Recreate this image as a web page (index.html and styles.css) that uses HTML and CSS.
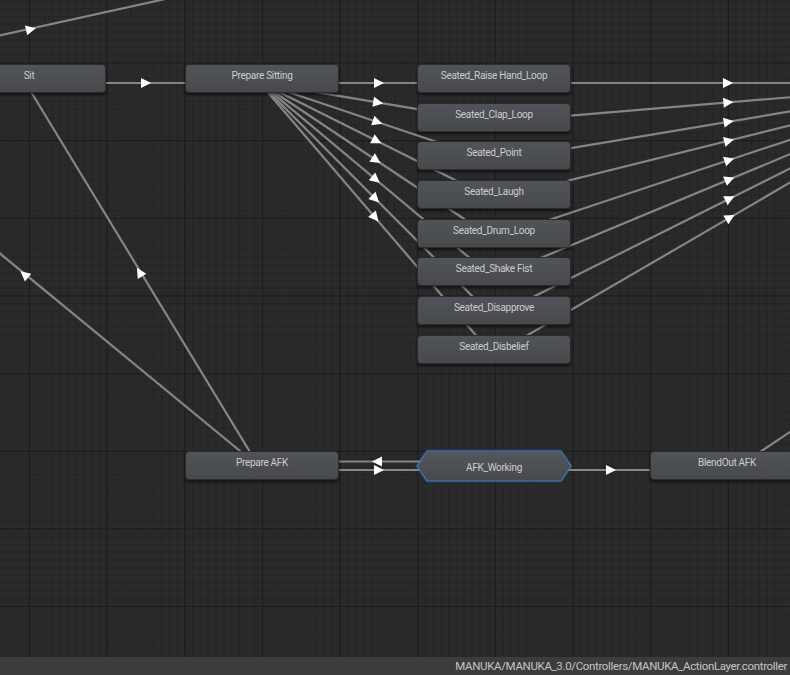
FILE: index.html
```html
<!DOCTYPE html>
<html>
<head>
<meta charset="utf-8">
<link rel="stylesheet" href="styles.css">
</head>
<body>
<div class="window">
  <div class="canvas">
    <svg class="edges" width="790" height="657" viewBox="0 0 790 657">
      <g class="lines">
        <line x1="-10" y1="37.6" x2="172" y2="-2.5"/>
        <line x1="29" y1="83" x2="262" y2="83"/>
        <line x1="262" y1="83" x2="494" y2="83"/>
        <line x1="261.25" y1="82.94" x2="493.25" y2="121.94"/>
        <line x1="260.57" y1="82.77" x2="492.57" y2="160.77"/>
        <line x1="259.99" y1="82.53" x2="491.99" y2="198.53"/>
        <line x1="259.5" y1="82.24" x2="491.5" y2="237.24"/>
        <line x1="259.11" y1="81.95" x2="491.11" y2="275.95"/>
        <line x1="258.81" y1="81.68" x2="490.81" y2="314.68"/>
        <line x1="258.58" y1="81.43" x2="490.58" y2="352.43"/>
        <line x1="494" y1="83" x2="960" y2="83"/>
        <line x1="494.4" y1="122" x2="960.4" y2="83"/>
        <line x1="494.7" y1="160.9" x2="960.7" y2="82.9"/>
        <line x1="495.1" y1="198.9" x2="961.1" y2="82.9"/>
        <line x1="495.4" y1="237.8" x2="961.4" y2="82.8"/>
        <line x1="495.7" y1="276.7" x2="961.7" y2="82.7"/>
        <line x1="496" y1="315.5" x2="962" y2="82.5"/>
        <line x1="496.3" y1="353.4" x2="962.3" y2="82.4"/>
        <line x1="-20" y1="237" x2="262" y2="469"/>
        <line x1="22.6" y1="78" x2="257.9" y2="465"/>
        <line x1="262" y1="461.5" x2="494" y2="461.5"/>
        <line x1="262" y1="470" x2="494" y2="470"/>
        <line x1="494" y1="470" x2="727" y2="470"/>
        <line x1="727" y1="474" x2="805" y2="422"/>
      </g>
      <g class="arrows">
        <polygon points="-4,-5 6,0 -4,5" transform="translate(30 29.5) rotate(-12.4)"/>
        <polygon points="-4,-5 6,0 -4,5" transform="translate(145 83)"/>
        <polygon points="-4,-5 6,0 -4,5" transform="translate(378 83)"/>
        <polygon points="-4,-5 6,0 -4,5" transform="translate(377.2 102.4) rotate(9.54)"/>
        <polygon points="-4,-5 6,0 -4,5" transform="translate(376.6 121.8) rotate(18.58)"/>
        <polygon points="-4,-5 6,0 -4,5" transform="translate(376 140.5) rotate(26.57)"/>
        <polygon points="-4,-5 6,0 -4,5" transform="translate(375.5 159.7) rotate(33.75)"/>
        <polygon points="-4,-5 6,0 -4,5" transform="translate(375.1 179) rotate(39.9)"/>
        <polygon points="-4,-5 6,0 -4,5" transform="translate(374.8 198.2) rotate(45.12)"/>
        <polygon points="-4,-5 6,0 -4,5" transform="translate(374.6 216.9) rotate(49.44)"/>
        <polygon points="-4,-5 6,0 -4,5" transform="translate(727 83)"/>
        <polygon points="-4,-5 6,0 -4,5" transform="translate(727.4 102.5) rotate(-4.78)"/>
        <polygon points="-4,-5 6,0 -4,5" transform="translate(727.7 121.9) rotate(-9.5)"/>
        <polygon points="-4,-5 6,0 -4,5" transform="translate(728.1 140.9) rotate(-13.98)"/>
        <polygon points="-4,-5 6,0 -4,5" transform="translate(728.4 160.3) rotate(-18.4)"/>
        <polygon points="-4,-5 6,0 -4,5" transform="translate(728.7 179.7) rotate(-22.6)"/>
        <polygon points="-4,-5 6,0 -4,5" transform="translate(729 199) rotate(-26.57)"/>
        <polygon points="-4,-5 6,0 -4,5" transform="translate(729.3 217.9) rotate(-30.18)"/>
        <polygon points="-4,-5 6,0 -4,5" transform="translate(25 275) rotate(-140.5)"/>
        <polygon points="-4,-5 6,0 -4,5" transform="translate(140 273) rotate(-121.3)"/>
        <polygon points="-4,-5 6,0 -4,5" transform="translate(378 461.5) rotate(180)"/>
        <polygon points="-4,-5 6,0 -4,5" transform="translate(378 470)"/>
        <polygon points="-4,-5 6,0 -4,5" transform="translate(610 470)"/>
      </g>
    </svg>

    <div class="node n-sit">Sit</div>
    <div class="node n-prep-sit">Prepare Sitting</div>

    <div class="seated-col">
      <div class="node">Seated_Raise Hand_Loop</div>
      <div class="node">Seated_Clap_Loop</div>
      <div class="node">Seated_Point</div>
      <div class="node">Seated_Laugh</div>
      <div class="node">Seated_Drum_Loop</div>
      <div class="node">Seated_Shake Fist</div>
      <div class="node">Seated_Disapprove</div>
      <div class="node">Seated_Disbelief</div>
    </div>

    <div class="node n-prep-afk">Prepare AFK</div>

    <div class="hex-node">
      <svg class="hex-shape" width="158" height="34" viewBox="0 0 158 34">
        <defs>
          <linearGradient id="hexgrad" x1="0" y1="0" x2="0" y2="1">
            <stop offset="0" stop-color="#53565a"/>
            <stop offset="1" stop-color="#47494d"/>
          </linearGradient>
        </defs>
        <polygon class="hex-glow" points="12,2 146,2 156,17 146,32 12,32 2,17"/>
        <polygon class="hex-fill" points="12,2 146,2 156,17 146,32 12,32 2,17"/>
      </svg>
      <span class="hex-label">AFK_Working</span>
    </div>

    <div class="node n-blendout">BlendOut AFK</div>
  </div>
  <div class="status">MANUKA/MANUKA_3.0/Controllers/MANUKA_ActionLayer.controller</div>
</div>
</body>
</html>
```
FILE: styles.css
```css
html, body {
  margin: 0;
  padding: 0;
  background: #2a2a2a;
}

.window {
  width: 790px;
  height: 675px;
  display: flex;
  flex-direction: column;
  overflow: hidden;
  font-family: Roboto, "Noto Sans", sans-serif;
}

.canvas {
  position: relative;
  flex: 1;
  overflow: hidden;
  background-color: #2a2a2a;
  background-image:
    linear-gradient(to right, #1c1c1c 1px, transparent 1px),
    linear-gradient(to bottom, #1c1c1c 1px, transparent 1px),
    linear-gradient(to right, #242424 1px, transparent 1px),
    linear-gradient(to bottom, #242424 1px, transparent 1px);
  background-size: 77.67px 77.67px, 77.67px 77.67px, 7.767px 7.767px, 7.767px 7.767px;
  background-position: 29px 62.5px;
}

.edges {
  position: absolute;
  left: 0;
  top: 0;
}

.lines line {
  stroke: #858585;
  stroke-width: 2.2;
}

.arrows polygon {
  fill: #ffffff;
}

.node {
  position: absolute;
  width: 154px;
  height: 29px;
  box-sizing: border-box;
  border-radius: 4px;
  background: linear-gradient(to bottom, #505357, #47494d);
  border: 1px solid #2b2c2e;
  box-shadow: 0 2px 3px rgba(0, 0, 0, 0.55);
  color: #cdcdcd;
  font-size: 10px;
  letter-spacing: -0.3px;
  line-height: 21px;
  text-align: center;
  white-space: nowrap;
}

.n-sit { left: -48px; top: 64px; }
.n-prep-sit { left: 185px; top: 64px; }
.n-prep-afk { left: 185px; top: 451px; }
.n-blendout { left: 650px; top: 451px; }

.seated-col {
  position: absolute;
  left: 417px;
  top: 64px;
  display: flex;
  flex-direction: column;
  gap: 9.7px;
}

.seated-col .node {
  position: static;
}

.hex-node {
  position: absolute;
  left: 415px;
  top: 449px;
  width: 158px;
  height: 34px;
  display: flex;
  align-items: center;
  justify-content: center;
}

.hex-shape {
  position: absolute;
  left: 0;
  top: 0;
}

.hex-glow {
  fill: none;
  stroke: rgba(60, 130, 210, 0.25);
  stroke-width: 3;
  stroke-linejoin: round;
}

.hex-fill {
  fill: url(#hexgrad);
  stroke: #3a78bb;
  stroke-width: 1.2;
  stroke-linejoin: round;
}

.hex-label {
  position: relative;
  top: 1px;
  color: #cdcdcd;
  font-size: 10px;
  letter-spacing: -0.3px;
}

.status {
  height: 18px;
  background: #3c3c3c;
  color: #c4c4c4;
  font-size: 11.5px;
  letter-spacing: -0.35px;
  line-height: 18px;
  text-align: right;
  padding-right: 3px;
  white-space: nowrap;
}
```
